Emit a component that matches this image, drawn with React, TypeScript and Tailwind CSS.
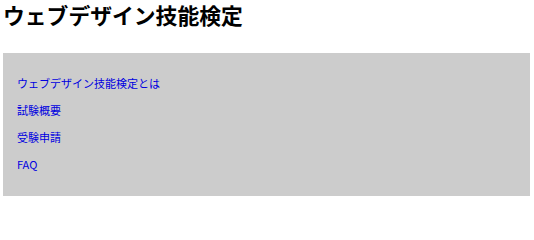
export default function App() {
  const items = ["ウェブデザイン技能検定とは", "試験概要", "受験申請", "FAQ"];
  return (
    <div className="w-[534px] h-[203px] bg-white" style={{ fontFamily: '"Noto Sans CJK JP", "Noto Sans", sans-serif' }}>
      <h1 className="ml-[3px] pt-[1px] text-[21.8px] leading-[28px] font-bold text-black">ウェブデザイン技能検定</h1>
      <nav className="ml-[3px] mt-[24px] w-[527px] h-[143px] bg-[#cccccc] pl-[14px] pt-[17px]">
        <ul className="flex flex-col">
          {items.map((t) => (
            <li key={t} className="h-[27px] leading-[27px] text-[11px]">
              <a href="#" className="text-[#0000e0]">{t}</a>
            </li>
          ))}
        </ul>
      </nav>
    </div>
  );
}
